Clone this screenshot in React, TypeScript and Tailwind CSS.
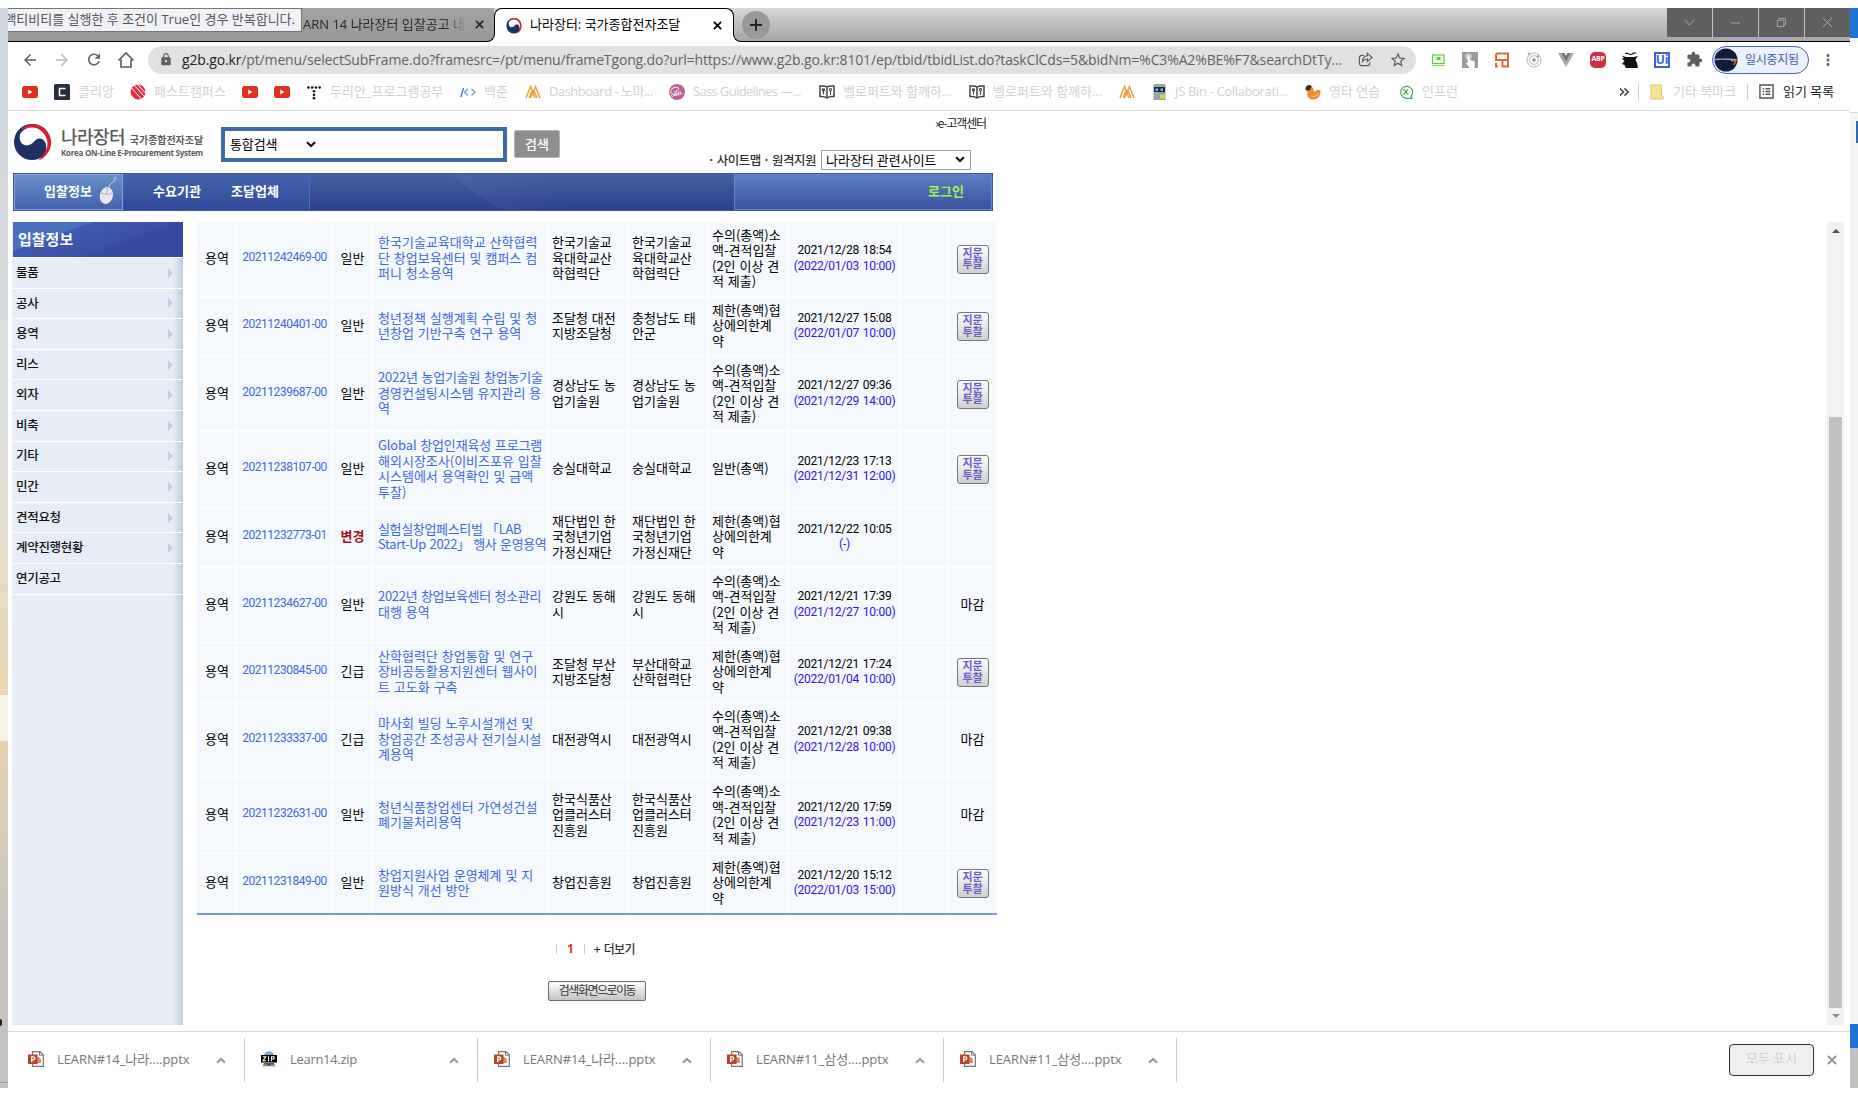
import React from 'react';
import {
  MdArrowBack,
  MdArrowForward,
  MdRefresh,
  MdLock,
  MdStarBorder,
  MdExtension,
  MdMoreVert,
} from 'react-icons/md';
import { FaSass } from 'react-icons/fa';

/* ---------- icons ---------- */

const Taegeuk = ({ className }: { className: string }) => (
  <svg viewBox="0 0 40 38" className={className} preserveAspectRatio="none">
    <circle cx="19.500" cy="18.500" r="18.500" fill="#1d3263" />
    <path d="M8 6C14-1 26-2 33 5C40 12 41 22 36 29C33 34 30 36 26 37.500C33 31 35 25 34 18C32 10 24 3 16 4C12 4.500 9 6 8 6Z" fill="#d4202c" />
    <path d="M8 9C14 2 24 2 30 8C35 13 37 20 34 27C35 20 32 15 27 15C22 15 21 22 14 22C8 22 5 15 8 9Z" fill="#fff" />
  </svg>
);

const YouTube = () => (
  <svg viewBox="0 0 16 16" className="h-4 w-4">
    <rect y="2" width="16" height="12" rx="2.500" fill="#e0301e" />
    <path d="M6.200 5.500v5l4.200-2.500z" fill="#fff" />
  </svg>
);

const Clien = () => (
  <svg viewBox="0 0 16 16" className="h-4 w-4">
    <rect width="16" height="16" rx="1.500" fill="#252d3e" />
    <path d="M11.500 4.500h-6v7h6" fill="none" stroke="#fff" strokeWidth="1.600" />
  </svg>
);

const FastCampus = () => (
  <svg viewBox="0 0 16 16" className="h-4 w-4">
    <circle cx="8" cy="8" r="7.500" fill="#e03048" />
    <path d="M4 1l10 11M1.500 4l10 11M7 0l8.500 9" stroke="#fff" strokeWidth="1" />
    <path d="M0 10l6 6H0z" fill="#fff" />
  </svg>
);

const Dots = () => (
  <svg viewBox="0 0 16 16" className="h-4 w-4" fill="#111">
    <circle cx="2.500" cy="3.500" r="1.300" />
    <circle cx="6.200" cy="3.500" r="1.300" />
    <circle cx="9.900" cy="3.500" r="1.300" />
    <circle cx="13.600" cy="3.500" r="1.300" />
    <circle cx="8" cy="7.200" r="1.300" />
    <circle cx="8" cy="10.800" r="1.300" />
    <circle cx="8" cy="14.300" r="1.300" />
  </svg>
);

const Baekjoon = () => (
  <svg viewBox="0 0 16 16" className="h-4 w-4" fill="none" strokeWidth="1.300">
    <path d="M3.500 4L.8 13" stroke="#3b6fb5" />
    <path d="M8 5L4.500 8.200L8 11.500M11.500 5L15 8.200L11.500 11.500" stroke="#6aa0dd" />
  </svg>
);

const Nomad = () => (
  <svg viewBox="0 0 16 16" className="h-4 w-4" fill="none" stroke="#eaa23c" strokeWidth="1.500">
    <path d="M1 14L5.500 2.500L10 14M5.500 14L10.500 2.500L15 14M4 14L7.500 5.500M12 14L8.500 5.500" />
  </svg>
);

const Book = () => (
  <svg viewBox="0 0 16 16" className="h-4 w-4" fill="none" stroke="#444" strokeWidth="1.500">
    <path d="M8 3C6 1.500 3.500 1.800 1 2v10.500c3-.3 5 0 7 1.500c2-1.500 4-1.800 7-1.500V2c-2.500-.2-5-.5-7 1zM8 3v11" />
    <path d="M4.500 4.500v6M3.500 4.500v2.500h2V4.500M11.500 7v4M10.700 4.500h1.600v2.500h-1.600z" strokeWidth="1" />
  </svg>
);

const JsBin = () => (
  <svg viewBox="0 0 16 16" className="h-4 w-4">
    <rect x="2.500" width="12" height="16" fill="#9aa4aa" />
    <rect x="3" y="3" width="11" height="5" fill="#1b2a33" />
    <rect x="4.500" y="4.500" width="2.500" height="2.500" fill="#62c3ee" />
    <rect x="9.500" y="4.500" width="2.500" height="2.500" fill="#62c3ee" />
    <rect x="9" y="10.500" width="4.500" height="4" fill="#ecd13c" />
  </svg>
);

const Typing = () => (
  <svg viewBox="0 0 16 16" className="h-4 w-4">
    <path d="M1 5C2 1 6 0 7.500 3.500L9.500 8c1.500-2 3.500-2.500 6-1.500C16 11.500 12.500 16 8 15.500C3.500 15 1.500 12 2.500 8.500z" fill="#ee8c2a" />
    <path d="M.5 4C1.500.5 5.500 0 6.500 3L4.500 6.500L.5 6z" fill="#3b2a1d" />
    <path d="M6 12c3 1.500 6 0 7.500-3" stroke="#f9c37a" strokeWidth="1.300" fill="none" />
  </svg>
);

const Inflearn = () => (
  <svg viewBox="0 0 16 16" className="h-4 w-4" fill="none" stroke="#45a552" strokeWidth="1.200">
    <path d="M13 12.500A6 6 0 1 0 8 14.300h6z" />
    <path d="M5 5.500c1.500 0 2.300.6 2.800 2c.7 1.700 1.400 2.800 2.700 3M7.800 8L5.500 10.500M9.700 5.300L8.500 7.500" />
  </svg>
);

const Ext = {
  screen: (
    <svg viewBox="0 0 16 16" className="h-4 w-4">
      <rect x="2.500" y="3" width="11.500" height="8.500" fill="none" stroke="#5fcb3c" strokeWidth="1.200" />
      <rect x="6.500" y="5" width="4" height="3" fill="#5fcb3c" />
      <path d="M2 13.500h12.500" stroke="#7be052" strokeWidth="1.200" />
    </svg>
  ),
  hand: (
    <svg viewBox="0 0 16 16" className="h-4 w-4">
      <rect width="16" height="16" fill="#9b9b9b" />
      <circle cx="6.500" cy="4.500" r="3.200" fill="#c9c9c9" />
      <path d="M5.600 4c.4-.8 1.700-.6 1.800.3L7.800 8l3.700.9c1.200.4 1.400 1.400 1.200 2.800L12.500 16H7.500L4 11.500c0-1 1.100-1.100 1.700-.4z" fill="#fff" />
    </svg>
  ),
  layout: (
    <svg viewBox="0 0 16 16" className="h-4 w-4" fill="none" stroke="#e2683a" strokeWidth="2">
      <path d="M2 1.500H14V14.500H8.500V8M14 8H2V1.500" />
      <path d="M2 11v3.500h2" />
    </svg>
  ),
  react: (
    <svg viewBox="0 0 16 16" className="h-4 w-4" fill="none" stroke="#b4b4b4">
      <circle cx="8" cy="8" r="7" />
      <circle cx="8" cy="8" r="4.300" />
      <circle cx="8" cy="8" r="1.600" fill="#999" />
      <circle cx="3" cy="1.800" r="1" fill="#999" />
      <circle cx="12" cy="4.500" r=".9" fill="#555" />
    </svg>
  ),
  vue: (
    <svg viewBox="0 0 16 16" className="h-4 w-4">
      <path d="M0 1h4.500L8 8l3.500-7H16L8 15z" fill="#a8a8a8" />
      <path d="M3.500 1H6.500L8 4l1.500-3h3L8 9z" fill="#6f6f6f" />
    </svg>
  ),
  dog: (
    <svg viewBox="0 0 16 16" className="h-4 w-4">
      <path d="M0 3.500l4 1.500h8l4-1l-2.500 3.500L15 11l1 5H4l-1.500-3L0 12l2.500-3L0 6.500l2-.5z" fill="#111" />
      <path d="M3 1.500c2-1.500 4 1.500 6 1s3-2.500 5-1.200" stroke="#222" strokeWidth="1.200" fill="none" />
    </svg>
  ),
};

const Ppt = () => (
  <svg viewBox="0 0 16 16" className="h-4 w-4">
    <path d="M4.500.7h7.500l3.300 3v11.600H4.500z" fill="#fff" stroke="#777" strokeWidth="1.200" />
    <path d="M11.500.7v3.500h3.800" fill="none" stroke="#777" />
    <path d="M9 6a4 4 0 0 1 4 4v2H9z" fill="#e58663" />
    <rect y="3.500" width="9.500" height="9.500" fill="#b7472a" />
    <path d="M3.700 11V5.800h1.600a1.500 1.500 0 0 1 0 3H3.700" fill="none" stroke="#fff" strokeWidth="1.300" />
  </svg>
);

const Zip = () => (
  <svg viewBox="0 0 16 16" className="h-4 w-4">
    <circle cx="8" cy="5.500" r="5.300" fill="#7fa8cf" />
    <path d="M3 12h10l1 3H2z" fill="#3d5f8f" />
    <path d="M2 14.500h4M10 14.500h4" stroke="#d8912c" strokeWidth="2" />
    <rect y="4" width="16" height="7.500" fill="#000" />
    <path d="M1.800 5.700h3L2 9.800h3M7.500 5.200v5M10.500 10.300V5.700h2.500v2.300h-2.500" fill="none" stroke="#fff" strokeWidth="1.100" />
  </svg>
);

const Chevron = ({ className }: { className: string }) => (
  <svg viewBox="0 0 10 7" className={className} fill="none" stroke="currentColor">
    <path d="M1 1.200L5 5L9 1.200" strokeWidth="2" />
  </svg>
);

const Cross = ({ className }: { className: string }) => (
  <svg viewBox="0 0 10 10" className={className} fill="none" stroke="currentColor">
    <path d="M1 1l8 8M9 1l-8 8" strokeWidth="2" />
  </svg>
);

/* ---------- browser chrome ---------- */

const TabStrip = () => (
  <div className="relative flex h-[34px] shrink-0 border-b border-black bg-gradient-to-b from-[#d8d8d8] to-[#a6a6a6]">
    <div className="flex h-[33px] w-[486px] items-center bg-gradient-to-b from-[#a2a2a2] to-[#989898] pl-[295px] text-[13px] text-[#2a2a2a]">
      <span className="w-[163px] overflow-hidden whitespace-nowrap [mask-image:linear-gradient(to_right,black_88%,transparent)]">ARN 14 나라장터 입찰공고 내용</span>
      <Cross className="ml-[9px] h-[9px] w-[9px]" />
    </div>
    <div className="relative z-10 flex h-[34px] w-[240px] items-center rounded-t-lg border border-b-0 border-black bg-white pl-[11px] text-[13px] text-black">
      <span className="absolute -left-[8px] bottom-0 h-2 w-2 bg-white">
        <span className="block h-2 w-2 rounded-br-lg border-b border-r border-black bg-[#989898]" />
      </span>
      <span className="absolute -right-[8px] bottom-0 h-2 w-2 bg-white">
        <span className="block h-2 w-2 rounded-bl-lg border-b border-l border-black bg-[#aaaaaa]" />
      </span>
      <Taegeuk className="h-[16px] w-4" />
      <span className="-mt-px ml-2 w-[183px] whitespace-nowrap">나라장터: 국가종합전자조달</span>
      <Cross className="h-[9px] w-[9px]" />
    </div>
    <div className="ml-2 mt-[3px] flex h-7 w-7 items-center justify-center rounded-full bg-[#999]">
      <svg viewBox="0 0 12 12" className="h-3 w-3" stroke="#222" strokeWidth="1.800">
        <path d="M6 0v12M0 6h12" />
      </svg>
    </div>
    <div className="ml-auto flex h-[29px] gap-px bg-[#c4c4c4] text-[#a8a8a8]">
      {[
        <path key="a" d="M1 3l5 6l5-6" />,
        <path key="b" d="M1 6.500h10" />,
        <path key="c" d="M1.500 3.500h7v7h-7zM3.500 3.500v-2h7v7h-2" />,
        <path key="d" d="M1 1l10 10M11 1L1 11" />,
      ].map((p, i) => (
        <div key={i} className="flex w-[45px] items-center justify-center bg-[#5f5f5f]">
          <svg viewBox="0 0 12 12" className="h-[11px] w-[11px]" fill="none" stroke="currentColor">{p}</svg>
        </div>
      ))}
    </div>
    <div className="absolute left-0 top-0 z-20 flex h-6 w-[294px] items-center justify-end overflow-hidden whitespace-nowrap border border-l-0 border-[#767676] bg-[#f1f2f7] pr-[6px] text-[13px] text-[#555]">
      액티비티를 실행한 후 조건이 True인 경우 반복합니다.
    </div>
  </div>
);

const Toolbar = () => (
  <div className="flex h-[35px] shrink-0 items-center text-[#5a5f63]">
    <div className="flex w-[140px] items-center gap-[14px] pl-[13px]">
      <MdArrowBack className="h-[18px] w-[18px]" />
      <MdArrowForward className="h-[18px] w-[18px] text-[#b9b9b9]" />
      <MdRefresh className="h-[19px] w-[18px]" />
      <svg viewBox="0 0 18 18" className="h-[18px] w-[18px]" fill="none" stroke="currentColor" strokeWidth="1.700">
        <path d="M1.500 9.500L9 2l7.500 7.500M4 8.500V16h10V8.500" />
      </svg>
    </div>
    <div className="flex h-7 w-[1268px] items-center rounded-full bg-[#e1e1e1] pl-[11px]">
      <MdLock className="h-[15px] w-[14px]" />
      <span className="ml-[9px] w-[1176px] whitespace-nowrap text-[14px] tracking-[-0.145px] text-[#606468]">
        <span className="text-[#222]">g2b.go.kr</span>/pt/menu/selectSubFrame.do?framesrc=/pt/menu/frameTgong.do?url=https://www.g2b.go.kr:8101/ep/tbid/tbidList.do?taskClCds=5&amp;bidNm=%C3%A2%BE%F7&amp;searchDtTy...
      </span>
      <svg viewBox="0 0 16 16" className="h-[15px] w-[15px]" fill="none" stroke="currentColor" strokeWidth="1.300">
        <path d="M6.500 3.500H4a2.500 2.500 0 0 0-2.500 2.500v6A2.500 2.500 0 0 0 4 14.500h6a2.500 2.500 0 0 0 2.500-2.500v-1" />
        <path d="M10 1.500l5 4.300l-5 4.200V7.500c-2.500 0-4 .8-5.200 2.500C5 6.500 7 4.300 10 4z" />
      </svg>
      <MdStarBorder className="ml-[16px] h-[18px] w-[18px]" />
    </div>
    <div className="ml-[14px] flex items-center gap-4">
      {Ext.screen}
      {Ext.hand}
      {Ext.layout}
      {Ext.react}
      {Ext.vue}
      <span className="flex h-4 w-4 items-center justify-center rounded-[5px] bg-[#cf2f43] text-[7px] font-bold tracking-[-0.3px] text-white">ABP</span>
      {Ext.dog}
      <span className="flex h-4 w-4 items-center justify-center border-2 border-[#3f62d8] text-[12px] font-bold leading-none text-[#3f62d8]">Ui</span>
      <MdExtension className="h-[17px] w-[17px]" />
    </div>
    <div className="ml-[9px] flex h-7 w-[97px] items-center rounded-full border border-[#3f62c8] bg-[#edf1fb] pl-px text-[12px] text-[#3c5cc0]">
      <svg viewBox="0 0 24 24" className="h-6 w-6">
        <circle cx="12" cy="12" r="11.500" fill="#101c38" />
        <path d="M1 11.500c7-1 13 0 21 0" stroke="#9aa7ba" strokeWidth="1.300" fill="none" />
        <path d="M17 13l5-1l-2 5" stroke="#c7793c" strokeWidth="1.500" fill="none" />
      </svg>
      <span className="ml-[7px] whitespace-nowrap tracking-[-0.3px]">일시중지됨</span>
    </div>
    <MdMoreVert className="ml-[10px] h-[18px] w-[18px]" />
  </div>
);

const bookmarks: { icon: React.ReactNode; label?: string; w: string; t?: string }[] = [
  { icon: <YouTube />, w: 'w-[32px]' },
  { icon: <Clien />, label: '클리앙', w: 'w-[76px]' },
  { icon: <FastCampus />, label: '패스트캠퍼스', w: 'w-[112px]' },
  { icon: <YouTube />, w: 'w-[32px]' },
  { icon: <YouTube />, w: 'w-[32px]' },
  { icon: <Dots />, label: '두리안_프로그램공부', w: 'w-[154px]' },
  { icon: <Baekjoon />, label: '백준', w: 'w-[65px]' },
  { icon: <Nomad />, label: 'Dashboard - 노마...', w: 'w-[144px]', t: 'tracking-[-0.5px]' },
  { icon: <FaSass className="h-4 w-4 rounded-full bg-[#bf5f93] p-[1px] text-white" />, label: 'Sass Guidelines —...', w: 'w-[150px]', t: 'tracking-[-0.65px]' },
  { icon: <Book />, label: '벨로퍼트와 함께하...', w: 'w-[150px]' },
  { icon: <Book />, label: '벨로퍼트와 함께하...', w: 'w-[150px]' },
  { icon: <Nomad />, w: 'w-[32px]' },
  { icon: <JsBin />, label: 'JS Bin - Collaborati...', w: 'w-[154px]', t: 'tracking-[-0.35px]' },
  { icon: <Typing />, label: '영타 연습', w: 'w-[93px]' },
  { icon: <Inflearn />, label: '인프런', w: 'w-[80px]' },
];

const BookmarkBar = () => (
  <div className="flex h-[34px] shrink-0 items-center border-b border-[#dadada] pb-[4px] pl-[14px] text-[13px] text-[#d2d2d2]">
    {bookmarks.map((b, i) => (
      <div key={i} className={`flex shrink-0 items-center gap-2 whitespace-nowrap ${b.w}`}>
        <span className="shrink-0">{b.icon}</span>
        {b.label && <span className={b.t}>{b.label}</span>}
      </div>
    ))}
    <div className="ml-auto flex items-center">
      <svg viewBox="0 0 10 8" className="h-2 w-[10px]" fill="none" stroke="#444" strokeWidth="1.600">
        <path d="M1 .5L4.500 4L1 7.500M5.500 .5L9 4L5.500 7.500" />
      </svg>
      <span className="ml-[9px] h-4 w-px bg-[#ccc]" />
      <svg viewBox="0 0 14 16" className="ml-[11px] h-4 w-[14px]">
        <path d="M1 1h10.500v10l1.500 1v3H1z" fill="#f7e49b" stroke="#e0c75a" />
      </svg>
      <span className="ml-[9px] w-[66px] whitespace-nowrap">기타 북마크</span>
      <span className="ml-[8px] h-4 w-px bg-[#ccc]" />
      <svg viewBox="0 0 16 16" className="ml-[11px] h-[15px] w-[15px]" fill="none" stroke="#4e5357" strokeWidth="1.500">
        <path d="M1 1h14v14H1zM4 5h1.500M7 5h5M4 8h1.500M7 8h5M4 11h1.500M7 11h5" />
      </svg>
      <span className="ml-[9px] mr-[14px] w-[53px] whitespace-nowrap text-[#222]">읽기 목록</span>
    </div>
  </div>
);

const downloads = [
  { icon: <Ppt />, name: 'LEARN#14_나라....pptx' },
  { icon: <Zip />, name: 'Learn14.zip' },
  { icon: <Ppt />, name: 'LEARN#14_나라....pptx' },
  { icon: <Ppt />, name: 'LEARN#11_삼성....pptx' },
  { icon: <Ppt />, name: 'LEARN#11_삼성....pptx' },
];

const DownloadShelf = () => (
  <div className="flex h-[57px] shrink-0 items-center border-t border-[#dadada] pl-[4px] text-[13px] text-[#777]">
    {downloads.map((d, i) => (
      <div key={i} className="flex h-11 w-[233px] items-center border-r border-[#ccc] pl-4">
        <span className="-mt-[3px]">{d.icon}</span>
        <span className={`ml-[13px] w-[157px] whitespace-nowrap ${i === 1 ? 'tracking-[-0.3px]' : 'tracking-[-0.08px]'}`}>{d.name}</span>
        <Chevron className="ml-[2px] h-[7px] w-[10px] rotate-180 text-[#999]" />
      </div>
    ))}
    <div className="ml-auto flex h-8 w-[85px] items-center justify-center rounded-[4px] border border-[#333] bg-[#f0f0f0] pb-[2px] text-[#d2d2d2]">모두 표시</div>
    <Cross className="ml-[13px] mr-[13px] h-[10px] w-[10px] text-[#999]" />
  </div>
);

/* ---------- site ---------- */

const SiteHeader = () => (
  <div className="flex h-[62px] w-[980px]">
    <Taegeuk className="mt-[13px] h-[37px] w-[39px]" />
    <div className="ml-[9px] mt-[14px] w-[145px] text-[#5c5c5c]">
      <div className="flex h-[22px] items-end whitespace-nowrap">
        <span className="text-[18px] font-medium leading-[22px] tracking-[-0.6px]">나라장터</span>
        <span className="ml-[5px] text-[10px] font-bold leading-[14px] tracking-[-0.05px]">국가종합전자조달</span>
      </div>
      <div className="whitespace-nowrap font-['Open_Sans'] text-[8px] font-bold leading-[12px] tracking-[-0.26px]">Korea ON-Line E-Procurement System</div>
    </div>
    <div className="ml-[15px] mt-[16px] flex h-[35px] w-[286px] items-center border-4 border-[#3e6ba3] bg-white pb-px pl-[5px] text-[13px] text-black">
      <span className="w-[75px] tracking-[-0.1px]">통합검색</span>
      <Chevron className="ml-px h-[7px] w-[10px]" />
    </div>
    <div className="ml-[7px] mt-[19px] flex h-7 w-[46px] items-center justify-center rounded-[2px] border border-[#b5b5b5] bg-[#8e8e8e] pb-px text-[13px] font-medium text-white">검색</div>
    <div className="ml-auto flex w-[300px] flex-col items-end">
      <div className="mr-[7px] mt-[2px] h-[20px] text-[12px] leading-[20px] tracking-[-1.15px] text-[#222]">›e-고객센터</div>
      <div className="mr-[22px] mt-[17px] flex items-center">
        <span className="mr-[5px] whitespace-nowrap text-[12.500px] font-medium tracking-[-0.5px] text-[#333]">· 사이트맵 · 원격지원</span>
        <div className="flex h-5 w-[150px] items-center border border-[#a0a0a0] bg-white pb-px pl-[4px] text-[13px] text-black">
          <span className="w-[129px] whitespace-nowrap">나라장터 관련사이트</span>
          <Chevron className="h-[7px] w-[10px]" />
        </div>
      </div>
    </div>
  </div>
);

const NavBar = () => (
  <div className="flex h-[38px] w-[980px] border border-[#3c5a9e] bg-gradient-to-b from-[#45619f] to-[#2d3f8c] text-[13px] font-bold text-white">
    <div className="flex w-[109px] items-center border border-[#7fa3d6] bg-gradient-to-b from-[#6a90c8] to-[#4561ad] pl-[29px]">
      <span className="-mt-[3px]">입찰정보</span>
      <svg viewBox="0 0 20 28" className="-mt-[2px] ml-[6px] h-7 w-[20px]">
        <path d="M11 11c0-6 6-4 6.500-11" stroke="#cfdcf0" fill="none" />
        <ellipse cx="8.500" cy="18.500" rx="6.500" ry="8.500" transform="rotate(12 8.500 18)" fill="#e8e8ec" />
        <path d="M3 16l6 1.500l5-1.500M9.500 11l-1 6" stroke="#a9adb8" fill="none" />
      </svg>
    </div>
    <div className="flex w-[187px] items-center border-r border-[#4f6fb4] bg-gradient-to-b from-[#4666ab] to-[#31489a] pb-[3px] pl-[30px]">
      <span className="w-[78px]">수요기관</span>
      <span>조달업체</span>
    </div>
    <div className="w-[424px] bg-[linear-gradient(35deg,transparent_40%,rgba(255,255,255,0.04)_40%,transparent_60%)]" />
    <div className="flex flex-1 items-center justify-end border border-[#6288c8] bg-gradient-to-b from-[#5a7fc0] to-[#3a529f] pb-[3px] pr-[27px] text-[#a6f052]">로그인</div>
  </div>
);

const menu = ['물품', '공사', '용역', '리스', '외자', '비축', '기타', '민간', '견적요청', '계약진행현황', '연기공고'];

const Sidebar = () => (
  <div className="flex h-[803px] w-[171px] shrink-0 flex-col bg-[linear-gradient(to_right,#e6edf6_160px,#dde4ee_164px,#c4cbd6_171px)]">
    <div className="ml-px flex h-[36px] items-center border-b border-white bg-[linear-gradient(160deg,#4a6fbf_30%,#3f5ab0_30%,#3a4fa6_62%,#3749a0_62%)] pl-[5px] text-[15px] font-bold text-white">입찰정보</div>
    {menu.map((m, i) => (
      <div key={m} className="flex h-[30.600px] items-center justify-between border-b border-white pl-[4px] pr-[10px] text-[12.500px] font-medium tracking-[-0.3px] text-[#111]">
        <span className="-mt-px">{m}</span>
        {i < 10 && (
          <svg viewBox="0 0 5 10" className="h-[10px] w-[5px]">
            <path d="M0 0l5 5l-5 5z" fill="#b9cfe8" />
          </svg>
        )}
      </div>
    ))}
  </div>
);

type Row = {
  h: string;
  no: string;
  kind: string;
  title: string[];
  tight?: string;
  org: string[];
  org2?: string[];
  way: string[];
  open: string;
  close: string;
  state: string;
};

const quote4 = ['수의(총액)소', '액-견적입찰', '(2인 이상 견', '적 제출)'];
const limited = ['제한(총액)협', '상에의한계', '약'];

const rows: Row[] = [
  { h: 'h-[75px]', no: '20211242469-00', kind: '일반', title: ['한국기술교육대학교 산학협력', '단 창업보육센터 및 캠퍼스 컴', '퍼니 청소용역'], org: ['한국기술교', '육대학교산', '학협력단'], way: quote4, open: '2021/12/28 18:54', close: '(2022/01/03 10:00)', state: 'bid' },
  { h: 'h-[60px]', no: '20211240401-00', kind: '일반', title: ['청년정책 실행계획 수립 및 청', '년창업 기반구축 연구 용역'], org: ['조달청 대전', '지방조달청'], org2: ['충청남도 태', '안군'], way: limited, open: '2021/12/27 15:08', close: '(2022/01/07 10:00)', state: 'bid' },
  { h: 'h-[75px]', no: '20211239687-00', kind: '일반', title: ['2022년 농업기술원 창업농기술', '경영컨설팅시스템 유지관리 용', '역'], tight: '[&>div:first-child]:tracking-[-0.2px]', org: ['경상남도 농', '업기술원'], way: quote4, open: '2021/12/27 09:36', close: '(2021/12/29 14:00)', state: 'bid' },
  { h: 'h-[76px]', no: '20211238107-00', kind: '일반', title: ['Global 창업인재육성 프로그램', '해외시장조사(이비즈포유 입찰', '시스템에서 용역확인 및 금액', '투찰)'], tight: '[&>div:first-child]:tracking-[-0.15px]', org: ['숭실대학교'], way: ['일반(총액)'], open: '2021/12/23 17:13', close: '(2021/12/31 12:00)', state: 'bid' },
  { h: 'h-[60px]', no: '20211232773-01', kind: '변경', title: ['실험실창업페스티벌 「LAB', 'Start-Up 2022」 행사 운영용역'], tight: 'tracking-[-0.35px]', org: ['재단법인 한', '국청년기업', '가정신재단'], way: limited, open: '2021/12/22 10:05', close: '(-)', state: '' },
  { h: 'h-[75px]', no: '20211234627-00', kind: '일반', title: ['2022년 창업보육센터 청소관리', '대행 용역'], tight: '[&>div:first-child]:tracking-[-0.3px]', org: ['강원도 동해', '시'], way: quote4, open: '2021/12/21 17:39', close: '(2021/12/27 10:00)', state: '마감' },
  { h: 'h-[60px]', no: '20211230845-00', kind: '긴급', title: ['산학협력단 창업통합 및 연구', '장비공동활용지원센터 웹사이', '트 고도화 구축'], org: ['조달청 부산', '지방조달청'], org2: ['부산대학교', '산학협력단'], way: limited, open: '2021/12/21 17:24', close: '(2022/01/04 10:00)', state: 'bid' },
  { h: 'h-[75px]', no: '20211233337-00', kind: '긴급', title: ['마사회 빌딩 노후시설개선 및', '창업공간 조성공사 전기실시설', '계용역'], org: ['대전광역시'], way: quote4, open: '2021/12/21 09:38', close: '(2021/12/28 10:00)', state: '마감' },
  { h: 'h-[76px]', no: '20211232631-00', kind: '일반', title: ['청년식품창업센터 가연성건설', '폐기물처리용역'], org: ['한국식품산', '업클러스터', '진흥원'], way: quote4, open: '2021/12/20 17:59', close: '(2021/12/23 11:00)', state: '마감' },
  { h: 'h-[59px]', no: '20211231849-00', kind: '일반', title: ['창업지원사업 운영체계 및 지', '원방식 개선 방안'], org: ['창업진흥원'], way: limited, open: '2021/12/20 15:12', close: '(2022/01/03 15:00)', state: 'bid' },
];

const Cell = ({ lines, className = '' }: { lines: string[]; className?: string }) => (
  <div className={`flex flex-col justify-center whitespace-nowrap bg-[#f5f8fd] pb-[3px] ${className}`}>
    {lines.map((l, i) => (
      <div key={i}>{l}</div>
    ))}
  </div>
);

const BidTable = () => (
  <div className="w-[800px] border-b-2 border-[#759cd8] text-[13px] leading-[15.500px] text-black [word-spacing:1px]">
    {rows.map((r, i) => (
      <div
        key={r.no}
        className={`grid grid-cols-[39px_95px_39px_175px_79px_79px_79px_111px_47px_47px] gap-x-px ${i < 9 ? 'pb-px' : ''} ${r.h}`}
      >
        <Cell lines={['용역']} className="items-center pl-px" />
        <Cell lines={[r.no]} className="items-center font-['Roboto'] text-[12px] tracking-[-0.450px] text-[#4169e1]" />
        <Cell lines={[r.kind]} className={r.kind === '변경' ? 'items-center font-bold text-[#9c1420]' : 'items-center'} />
        <Cell lines={r.title} className={`pl-[5px] text-[#4169e1] ${r.tight ?? ''}`} />
        <Cell lines={r.org} className="pl-[3px]" />
        <Cell lines={r.org2 ?? r.org} className="pl-[3px]" />
        <Cell lines={r.way} className="pl-[3px]" />
        <div className="flex flex-col items-center justify-center whitespace-nowrap bg-[#f5f8fd] pb-px font-['Roboto'] text-[12px] tracking-[-0.240px]">
          <div>{r.open}</div>
          <div className="text-[#2f14ee]">{r.close}</div>
        </div>
        <Cell lines={[]} />
        <div className="flex items-center justify-center bg-[#f5f8fd]">
          {r.state === 'bid' ? (
            <div className="flex h-[29px] w-8 flex-col items-center justify-center rounded-[3px] border border-[#777] bg-gradient-to-b from-white to-[#cfcfcf] pb-[2px] text-[11px] font-bold leading-[11.500px] text-[#6a62c6]">
              <span>지문</span>
              <span>투찰</span>
            </div>
          ) : (
            <span className="-mt-[3px]">{r.state}</span>
          )}
        </div>
      </div>
    ))}
  </div>
);

const Scrollbar = () => (
  <div className="ml-auto mr-[6px] flex h-[803px] w-[17px] flex-col items-center bg-[#f1f1f1]">
    <svg viewBox="0 0 8 4" className="mt-[7px] h-1 w-2"><path d="M0 4l4-4l4 4z" fill="#505050" /></svg>
    <div className="mt-[184px] h-[591px] w-[13px] bg-[#c1c1c1]" />
    <svg viewBox="0 0 8 4" className="mt-[6px] h-1 w-2"><path d="M0 0h8l-4 4z" fill="#8c8c8c" /></svg>
  </div>
);

export default function App() {
  return (
    <div className="flex h-[1096px] w-[1858px] overflow-hidden bg-white py-2 font-['Open_Sans','Noto_Sans_CJK_KR',sans-serif]">
      <div className="flex w-2 shrink-0 flex-col">
        <div className="h-[687px] bg-gradient-to-b from-[#d0d7e0] via-[#dcdedd] via-60% to-[#ecd9b0]" />
        <div className="h-[46px] bg-[#f7f2e8]" />
        <div className="flex flex-1 flex-col bg-gradient-to-b from-[#e6d2ae] via-[#c8c6c0] to-[#c2c2c0]">
          <div className="mt-[278px] h-[7px] w-[2px] rounded-r-full bg-[#222]" />
          <div className="mt-[56px] h-px bg-[#999]" />
        </div>
      </div>
      <div className="flex w-[1842px] shrink-0 flex-col">
        <TabStrip />
        <Toolbar />
        <BookmarkBar />
        <div className="flex h-[920px] shrink-0 flex-col font-['Noto_Sans_CJK_KR',sans-serif]">
          <div className="pl-[5px]">
            <SiteHeader />
            <NavBar />
          </div>
          <div className="mt-[11px] flex pl-1">
            <Sidebar />
            <div className="ml-[14px] flex w-[800px] flex-col items-center">
              <BidTable />
              <div className="mr-[3px] mt-[26px] flex h-4 items-center text-[12px] text-[#333]">
                <span className="h-[10px] w-px bg-[#ccc]" />
                <span className="mx-[10px] font-['Open_Sans'] font-bold text-[#e03020]">1</span>
                <span className="h-[10px] w-px bg-[#ccc]" />
                <span className="ml-[9px] font-medium tracking-[-0.6px] [word-spacing:1.500px]">+ 더보기</span>
              </div>
              <div className="mt-[24px] flex h-5 w-[98px] items-center justify-center rounded-[2px] border border-[#6a6a66] bg-gradient-to-b from-white to-[#c4c4c0] pb-[3px] text-[12px] tracking-[-1.500px] text-[#333]">검색화면으로이동</div>
            </div>
            <Scrollbar />
          </div>
        </div>
        <DownloadShelf />
      </div>
      <div className="flex w-2 shrink-0 flex-col">
        <div className="h-[30px] bg-[#1b74d4]" />
        <div className="h-[75px] border-b border-[#d5d8d8] bg-white" />
        <div className="flex h-[911px] flex-col bg-[#f4f6f6]">
          <div className="ml-auto mt-[8px] h-[22px] w-[2px] bg-[#2a6cb8]" />
        </div>
        <div className="h-6 bg-[#1b74d4]" />
        <div className="flex-1 bg-[#c3c1bc]" />
      </div>
    </div>
  );
}
